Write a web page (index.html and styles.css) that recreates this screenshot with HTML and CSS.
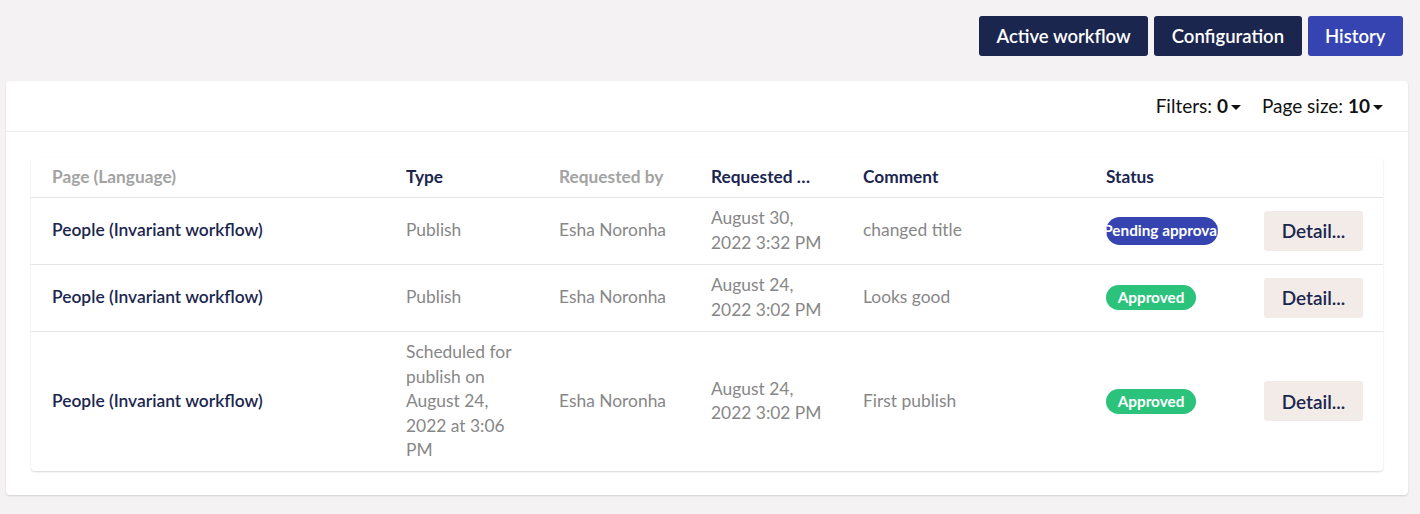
FILE: index.html
```html
<!DOCTYPE html>
<html lang="en">
<head>
<meta charset="utf-8">
<title>Workflow history</title>
<link rel="stylesheet" href="styles.css">
</head>
<body>
<div class="page">
  <div class="toolbar">
    <button class="tbtn tbtn-dark">Active workflow</button>
    <button class="tbtn tbtn-dark">Configuration</button>
    <button class="tbtn tbtn-blue">History</button>
  </div>
  <div class="card">
    <div class="card-head">
      <span class="opt">Filters: <b>0</b><i class="caret"></i></span>
      <span class="opt">Page size: <b>10</b><i class="caret"></i></span>
    </div>
    <div class="card-body">
      <table class="grid">
        <colgroup>
          <col class="c1"><col class="c2"><col class="c3"><col class="c4"><col class="c5"><col class="c6"><col class="c7">
        </colgroup>
        <thead>
          <tr>
            <th class="muted">Page (Language)</th>
            <th>Type</th>
            <th class="muted">Requested by</th>
            <th>Requested …</th>
            <th>Comment</th>
            <th>Status</th>
            <th></th>
          </tr>
        </thead>
        <tbody>
          <tr>
            <td class="name">People (Invariant workflow)</td>
            <td>Publish</td>
            <td>Esha Noronha</td>
            <td>August 30, 2022 3:32 PM</td>
            <td>changed title</td>
            <td><span class="badge badge-pending">Pending approval</span></td>
            <td><button class="detail">Detail...</button></td>
          </tr>
          <tr>
            <td class="name">People (Invariant workflow)</td>
            <td>Publish</td>
            <td>Esha Noronha</td>
            <td>August 24, 2022 3:02 PM</td>
            <td>Looks good</td>
            <td><span class="badge badge-ok">Approved</span></td>
            <td><button class="detail">Detail...</button></td>
          </tr>
          <tr>
            <td class="name">People (Invariant workflow)</td>
            <td>Scheduled for publish on August 24, 2022 at 3:06 PM</td>
            <td>Esha Noronha</td>
            <td>August 24, 2022 3:02 PM</td>
            <td>First publish</td>
            <td><span class="badge badge-ok">Approved</span></td>
            <td><button class="detail">Detail...</button></td>
          </tr>
        </tbody>
      </table>
    </div>
  </div>
</div>
</body>
</html>
```

FILE: styles.css
```css
* { box-sizing: border-box; }
html, body { margin: 0; padding: 0; }
body {
  background: #f4f2f2;
  font-family: Lato, "Open Sans", Arial, sans-serif;
  color: #1b264f;
  width: 1420px;
  height: 514px;
  overflow: hidden;
}
.page {
  padding: 16px 12px 0 6px;
}
.toolbar {
  display: flex;
  justify-content: flex-end;
  gap: 6px;
  padding-right: 5px;
}
.tbtn {
  height: 40px;
  border: 0;
  border-radius: 3px;
  padding: 0 17.5px;
  font-family: inherit;
  font-size: 18.5px;
  font-weight: 600;
  color: #fff;
  cursor: pointer;
}
.tbtn-dark { background: #1b264f; }
.tbtn-blue { background: #3544b1; }

.card {
  margin-top: 25px;
  background: #fff;
  border-radius: 4px;
  box-shadow: 0 1px 2px rgba(0,0,0,0.14);
}
.card-head {
  height: 51px;
  border-bottom: 1px solid #ebebeb;
  display: flex;
  justify-content: flex-end;
  align-items: center;
  gap: 21px;
  padding: 0 25px 2px;
  font-size: 19px;
  color: #111;
}
.opt b { font-weight: 700; }
.caret {
  display: inline-block;
  width: 0; height: 0;
  border-left: 5px solid transparent;
  border-right: 5px solid transparent;
  border-top: 5px solid #111;
  margin-left: 3px;
  vertical-align: 3px;
}
.card-body {
  padding: 26px 25px 24px;
}
.grid {
  width: 100%;
  border-collapse: collapse;
  table-layout: fixed;
  background: #fff;
  border-radius: 4px;
  box-shadow: 0 1px 2px rgba(0,0,0,0.16);
  font-size: 17.4px;
  line-height: 24.5px;
}
.c1 { width: 354px; }
.c2 { width: 153px; }
.c3 { width: 152px; }
.c4 { width: 152px; }
.c5 { width: 243px; }
.c6 { width: 158px; }
.c7 { width: 140px; }
th {
  text-align: left;
  font-weight: 700;
  font-size: 17.3px;
  color: #1b264f;
  height: 39px;
  padding: 0 16px 0 21px;
  border-bottom: 1px solid #e6e6e6;
  white-space: nowrap;
  overflow: hidden;
}
th.muted { color: #a3a3a3; }
td {
  padding: 8.5px 14px 8.5px 21px;
  color: #878787;
  vertical-align: middle;
  border-bottom: 1px solid #e6e6e6;
}
tbody tr:last-child td { border-bottom: 0; }
td.name {
  color: #1b264f;
  font-weight: 600;
}
.badge {
  display: flex;
  justify-content: center;
  align-items: center;
  height: 26px;
  border-radius: 13px;
  color: #fff;
  font-weight: 700;
  font-size: 15.3px;
  white-space: nowrap;
  overflow: hidden;
}
.badge-pending { background: #3544b1; width: 112px; height: 28px; border-radius: 14px; }
.badge-ok { background: #2bc37c; width: 90px; height: 25px; }
.detail {
  display: block;
  width: 99px;
  height: 40px;
  border: 0;
  border-radius: 3px;
  background: #f3ebe8;
  color: #1b264f;
  font-family: inherit;
  font-size: 19px;
  font-weight: 600;
  cursor: pointer;
}
```
